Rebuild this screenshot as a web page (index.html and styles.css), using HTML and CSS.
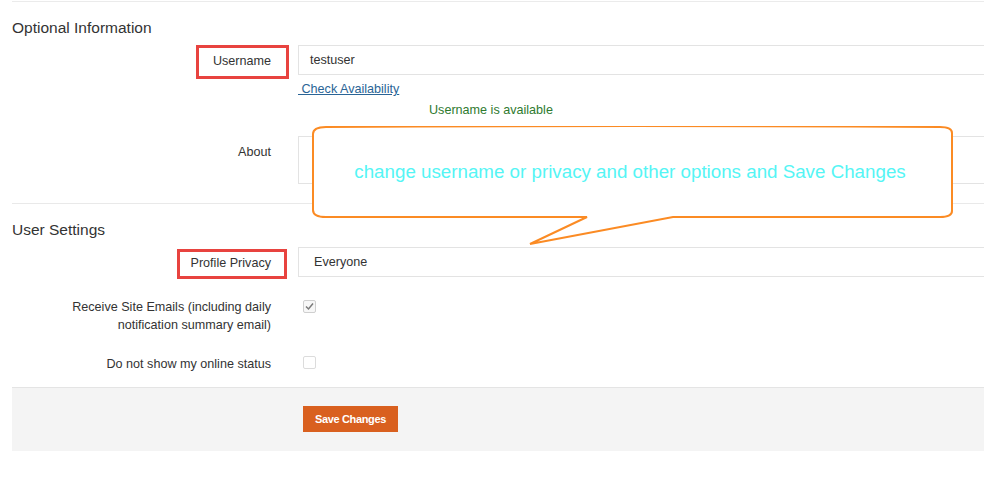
FILE: index.html
```html
<!DOCTYPE html>
<html>
<head>
<meta charset="utf-8">
<link rel="stylesheet" href="styles.css">
</head>
<body>
<div class="page">
  <h3 class="section-title">Optional Information</h3>
  <div class="row row-username">
    <div class="label"><span class="mark mark-user">Username</span></div>
    <div class="field">
      <div class="input">testuser</div>
      <a class="link" href="#">&nbsp;Check Availability</a>
      <div class="status">Username is available</div>
    </div>
  </div>
  <div class="row row-about">
    <div class="label label-top">About</div>
    <div class="field"><div class="textarea"></div></div>
  </div>
  <div class="separator"></div>
  <h3 class="section-title">User Settings</h3>
  <div class="row row-privacy">
    <div class="label"><span class="mark mark-privacy">Profile Privacy</span></div>
    <div class="field"><div class="input input-select">Everyone</div></div>
  </div>
  <div class="row row-emails">
    <div class="label label-multi">Receive Site Emails (including daily notification summary email)</div>
    <div class="field"><span class="checkbox checkbox-on"><svg width="11" height="11" viewBox="0 0 11 11"><path d="M2 5.5 L4.5 8 L9 2.5" fill="none" stroke="#7a7a7a" stroke-width="1.5"/></svg></span></div>
  </div>
  <div class="row row-online">
    <div class="label label-multi">Do not show my online status</div>
    <div class="field"><span class="checkbox checkbox-off"></span></div>
  </div>
  <div class="footer">
    <button class="btn">Save Changes</button>
  </div>
</div>

<div class="callout">
  <svg class="callout-shape" width="642" height="122" viewBox="0 0 642 122">
    <path d="M 14 1 Q 320 -1 628 1 Q 640 1 640 7 L 640 85 Q 640 91 628 91 L 361 91 L 218 118 L 275 91 L 14 91 Q 1 91 1 84 L 1 8 Q 1 1 14 1 Z" fill="#ffffff" stroke="#fb8b24" stroke-width="2" stroke-linejoin="miter"/>
  </svg>
  <div class="callout-text">change username or privacy and other options and Save Changes</div>
</div>
</body>
</html>
```

FILE: styles.css
```css
html, body {
  margin: 0;
  padding: 0;
  background: #ffffff;
  overflow: hidden;
}
body {
  position: relative;
  width: 984px;
  height: 478px;
  font-family: "Liberation Sans", Arial, sans-serif;
  color: #333333;
}
.page {
  margin: 1px -12px 0 12px;
  border-top: 1px solid #ebebeb;
}
.section-title {
  margin: 15px 0 0 0;
  padding-top: 1px;
  font-size: 15.5px;
  line-height: 20px;
  font-weight: normal;
  color: #333333;
}
.row {
  display: flex;
  align-items: flex-start;
  font-size: 12.6px;
}
.label {
  width: 259px;
  flex: none;
  text-align: right;
  line-height: 30px;
  padding-top: 1px;
  box-sizing: border-box;
}
.label-top {
  line-height: 16px;
  padding-top: 8px;
}
.label-multi {
  line-height: 18px;
  padding-left: 50px;
}
.field {
  flex: 1;
  margin-left: 27px;
  display: flex;
  flex-direction: column;
  align-items: flex-start;
}
.mark {
  position: relative;
  display: inline-block;
  line-height: 30px;
}
.mark::after {
  content: "";
  position: absolute;
  border: 3px solid #e8433f;
  pointer-events: none;
}
.mark-user::after {
  top: -1px;
  bottom: -3px;
  left: -17px;
  right: -18px;
}
.mark-privacy::after {
  top: 1px;
  bottom: -1px;
  left: -14px;
  right: -16px;
}
.row-username { margin-top: 7px; }
.input {
  align-self: stretch;
  height: 30px;
  box-sizing: border-box;
  border: 1px solid #e3e3e3;
  padding: 1px 0 0 11px;
  line-height: 27px;
  font-size: 12.6px;
  color: #333333;
}
.input-select {
  padding-left: 15px;
}
.link {
  display: inline-block;
  margin-top: 6px;
  line-height: 16px;
  color: #2a6496;
  text-decoration: underline;
}
.status {
  margin-top: 5px;
  line-height: 16px;
  padding-left: 131px;
  color: #2f7a2f;
}
.row-about { margin-top: 18px; }
.textarea {
  align-self: stretch;
  height: 48px;
  box-sizing: border-box;
  border: 1px solid #e3e3e3;
}
.separator {
  margin-top: 19px;
  height: 0;
  border-top: 1px solid #e9e9e9;
}
.row-privacy { margin-top: 7px; }
.row-emails { margin-top: 19px; }
.row-online { margin-top: 20px; }
.checkbox {
  display: block;
  width: 13px;
  height: 13px;
  box-sizing: border-box;
  border: 1px solid #d6d6d6;
  border-radius: 2px;
  margin-left: 5px;
  background: #ffffff;
  position: relative;
}
.checkbox svg {
  position: absolute;
  left: 0;
  top: 0;
}
.checkbox-on { margin-top: 3px; border-color: #cfcfcf; background: #f7f7f7; }
.checkbox-off { margin-top: 2px; border-color: #dcdcdc; }
.footer {
  margin-top: 14px;
  border-top: 1px solid #e4e4e4;
  background: #f4f4f4;
  height: 64px;
  box-sizing: border-box;
  padding: 18px 0 0 291px;
}
.btn {
  display: block;
  width: 95px;
  height: 26px;
  border: none;
  background: #d9601f;
  color: #ffffff;
  font-family: "Liberation Sans", Arial, sans-serif;
  font-size: 11px;
  font-weight: bold;
  letter-spacing: -0.35px;
  padding: 0;
  text-align: center;
}
.callout {
  position: absolute;
  left: 312px;
  top: 126px;
  width: 642px;
  height: 122px;
}
.callout-shape {
  position: absolute;
  left: 0;
  top: 0;
}
.callout-text {
  position: absolute;
  left: 0;
  top: 35px;
  width: 636px;
  text-align: center;
  line-height: 22px;
  font-size: 18.75px;
  color: #55f5f5;
  font-family: "Liberation Sans", Arial, sans-serif;
}
```
